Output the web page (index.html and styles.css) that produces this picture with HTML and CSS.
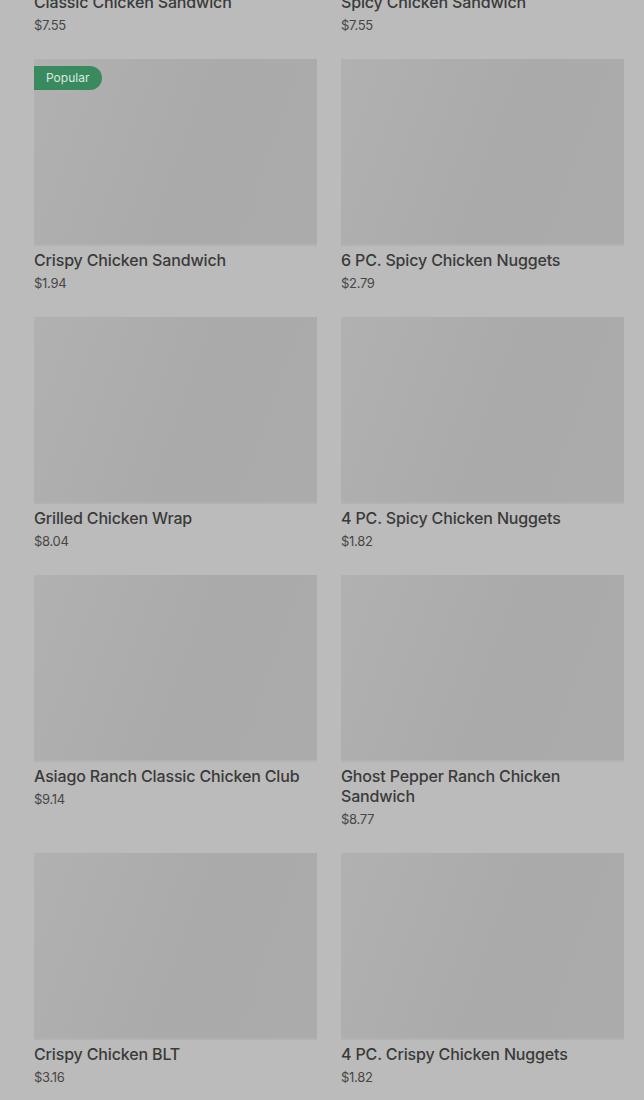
FILE: index.html
```html
<!DOCTYPE html>
<html lang="en">
<head>
  <meta charset="UTF-8" />
  <meta name="viewport" content="width=device-width, initial-scale=1" />
  <title>Menu - Chicken</title>
  <link rel="stylesheet" href="styles.css">
</head>
<body>

  <div class="container">
    <div class="menu-grid" id="menu-list"></div>
  </div>

  <script>
    const items = [
      { name: "Classic Chicken Sandwich", price: 7.55 },
      { name: "Spicy Chicken Sandwich", price: 7.55 },
      { name: "Crispy Chicken Sandwich", price: 1.94, popular: true },
      { name: "6 PC. Spicy Chicken Nuggets", price: 2.79 },
      { name: "Grilled Chicken Wrap", price: 8.04 },
      { name: "4 PC. Spicy Chicken Nuggets", price: 1.82 },
      { name: "Asiago Ranch Classic Chicken Club", price: 9.14 },
      { name: "Ghost Pepper Ranch Chicken Sandwich", price: 8.77 },
      { name: "Crispy Chicken BLT", price: 3.16 },
      { name: "4 PC. Crispy Chicken Nuggets", price: 1.82 }
    ];

    const list = document.getElementById('menu-list');
    items.forEach(item => {
      const card = document.createElement('div');
      card.className = 'item';
      card.innerHTML = `
        <div class="thumb">
          ${item.popular ? '<span class="badge">Popular</span>' : ''}
        </div>
        <h3>${item.name}</h3>
        <p class="price">$${item.price.toFixed(2)}</p>
      `;
      list.appendChild(card);
    });
  </script>

</body>
</html>
```

FILE: styles.css
```css
body {
  margin: 0;
  font-family: Inter, 'Noto Sans', sans-serif;
  background-color: #bbbbbb;
  color: #3a3a3a;
  overflow: hidden;
}

.container {
  padding: 0 20px 0 34px;
  margin-top: -199px;
}

.menu-grid {
  display: grid;
  grid-template-columns: 1fr 1fr;
  column-gap: 24px;
  row-gap: 25px;
}

.thumb {
  position: relative;
  height: 185px;
  background: linear-gradient(110deg, #b1b1b1, #aaaaaa 55%, #ababab);
  border-bottom: 2px solid #b2b2b2;
}

.badge {
  position: absolute;
  top: 7px;
  left: 0;
  height: 24px;
  line-height: 24px;
  padding: 0 13px 0 12px;
  background: #3a8a5f;
  color: #dde9e1;
  font-size: 12px;
  border-radius: 0 12px 12px 0;
}

.item h3 {
  margin: 4px 0 0;
  font-size: 16px;
  font-weight: 500;
  line-height: 20px;
  letter-spacing: -0.15px;
  color: #3a3a3a;
}

.price {
  margin: 5px 0 0;
  font-size: 13px;
  line-height: 17px;
  color: #474747;
  letter-spacing: -0.3px;
}
```
